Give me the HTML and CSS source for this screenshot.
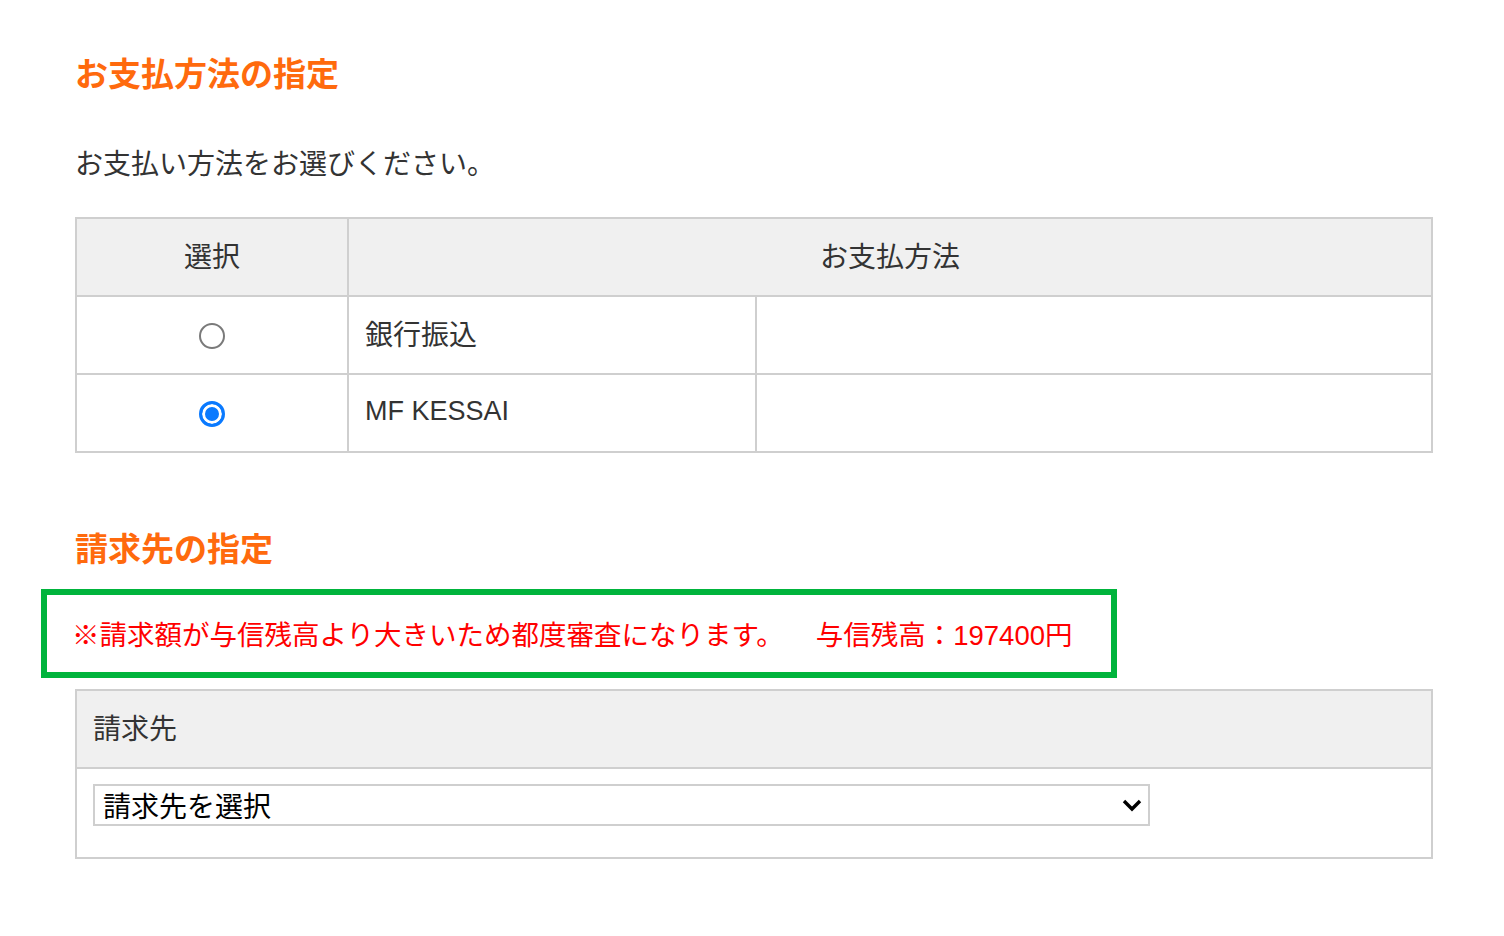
FILE: index.html
```html
<!DOCTYPE html>
<html lang="ja">
<head>
  <meta charset="UTF-8" />
  <title>お支払方法の指定</title>
  <meta name="viewport" content="width=device-width, initial-scale=1.0" />
  <link rel="stylesheet" href="styles.css">
</head>
<body>
  <div class="container">
    <h2 class="section-title">お支払方法の指定</h2>
    <p class="lead">お支払い方法をお選びください。</p>

    <table class="pay-table">
      <colgroup>
        <col class="col-select">
        <col class="col-name">
        <col>
      </colgroup>
      <thead>
        <tr>
          <th>選択</th>
          <th colspan="2">お支払方法</th>
        </tr>
      </thead>
      <tbody>
        <tr>
          <td class="radio-cell"><input type="radio" name="payment" value="bank"></td>
          <td>銀行振込</td>
          <td></td>
        </tr>
        <tr>
          <td class="radio-cell"><input type="radio" name="payment" value="mf" checked></td>
          <td class="latin">MF KESSAI</td>
          <td></td>
        </tr>
      </tbody>
    </table>

    <h2 class="section-title billing-title">請求先の指定</h2>

    <div class="notice">
      ※請求額が与信残高より大きいため都度審査になります。<span class="credit">与信残高：197400円</span>
    </div>

    <table class="bill-table">
      <thead>
        <tr><th>請求先</th></tr>
      </thead>
      <tbody>
        <tr>
          <td>
            <div class="select-wrap">
              <select id="billing">
                <option>請求先を選択</option>
              </select>
              <svg class="chevron" width="20" height="14" viewBox="0 0 20 14">
                <path d="M2 3 L10 11 L18 3" fill="none" stroke="#000" stroke-width="3.4" />
              </svg>
            </div>
          </td>
        </tr>
      </tbody>
    </table>
  </div>
</body>
</html>
```

FILE: styles.css
```css
body {
  margin: 0;
  padding: 0;
  background: #fff;
  color: #333;
  font-family: "Liberation Sans", "Noto Sans CJK JP", sans-serif;
}

.container {
  padding: 0 71px 80px 75px;
}

.section-title {
  margin: 51px 0 0;
  font-size: 33px;
  line-height: 48px;
  font-weight: bold;
  color: #ff6a0d;
}

.billing-title {
  margin-top: 73px;
}

.lead {
  margin: 46px 0 0;
  font-size: 28px;
  line-height: 40px;
}

table {
  width: 100%;
  border-collapse: collapse;
  font-size: 28px;
}

th, td {
  border: 2px solid #cfcfcf;
  padding: 0 16px 4px;
  height: 72px;
  text-align: left;
}

th {
  background-color: #f0f0f0;
  font-weight: normal;
  color: #333;
}

.pay-table {
  margin-top: 32px;
}

.pay-table th {
  text-align: center;
}

.col-select {
  width: 272px;
}

.col-name {
  width: 408px;
}

.radio-cell {
  text-align: center;
}

.latin {
  font-size: 27px;
}

input[type="radio"] {
  appearance: none;
  -webkit-appearance: none;
  width: 26px;
  height: 26px;
  margin: 4px 0 0;
  border: 2px solid #7a7a7a;
  border-radius: 50%;
  background: #fff;
  vertical-align: middle;
}

input[type="radio"]:checked {
  border: 3px solid #0a7aff;
  background: #0a7aff;
  box-shadow: inset 0 0 0 3px #fff;
}

.notice {
  box-sizing: border-box;
  width: 1076px;
  margin: 15px 0 0 -34px;
  padding: 5px 0 0 25px;
  border: 6px solid #00b43c;
  color: #ff0000;
  font-size: 27.5px;
  line-height: 72px;
  white-space: nowrap;
}

.credit {
  margin-left: 32px;
}

.bill-table {
  margin-top: 11px;
}

.bill-table td {
  height: 73px;
  vertical-align: top;
  padding-top: 15px;
  padding-bottom: 0;
}

.select-wrap {
  position: relative;
  width: 1057px;
}

.select-wrap select {
  appearance: none;
  -webkit-appearance: none;
  box-sizing: border-box;
  width: 100%;
  height: 42px;
  padding: 0 40px 0 8px;
  border: 2px solid #cfcfcf;
  border-radius: 0;
  background: #fff;
  color: #000;
  font-family: "Noto Sans CJK JP", sans-serif;
  font-size: 28px;
  line-height: 38px;
}

.chevron {
  position: absolute;
  right: 8px;
  top: 14px;
  pointer-events: none;
}
```
